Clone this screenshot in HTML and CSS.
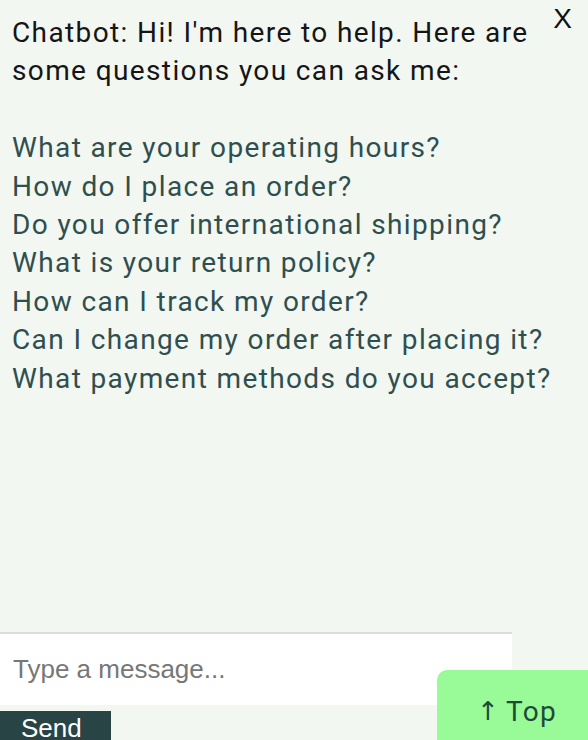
FILE: index.html
```html
<!DOCTYPE html>
<html>
<head>
<meta charset="utf-8">
<link rel="stylesheet" href="styles.css">
</head>
<body>
<div class="chat">
  <div class="messages">
    <div class="bot">Chatbot: Hi! I'm here to help. Here are some questions you can ask me:</div>
    <div class="spacer"></div>
    <ul class="questions">
      <li>What are your operating hours?</li>
      <li>How do I place an order?</li>
      <li>Do you offer international shipping?</li>
      <li>What is your return policy?</li>
      <li>How can I track my order?</li>
      <li>Can I change my order after placing it?</li>
      <li>What payment methods do you accept?</li>
    </ul>
    <button class="close">X</button>
  </div>
  <input class="msg-input" type="text" placeholder="Type a message...">
  <button class="send">Send</button>
</div>
<button class="top-btn"><span class="arrow">↑</span>Top</button>
</body>
</html>
```
FILE: styles.css
```css
html, body {
  margin: 0;
  padding: 0;
  background: #f3f7f1;
}
.chat {
  display: flex;
  flex-direction: column;
  align-items: flex-start;
}
.messages {
  position: relative;
  box-sizing: border-box;
  width: 100%;
  height: 632px;
  padding: 14px 0 0 12px;
  font-family: Roboto, "Noto Sans", sans-serif;
  font-size: 28px;
  line-height: 38.4px;
  letter-spacing: 1.38px;
}
.bot {
  color: #151515;
  max-width: 530px;
}
.spacer {
  height: 38.4px;
}
.questions {
  list-style: none;
  margin: 0;
  padding: 0;
  color: #2f4f4f;
}
.close {
  position: absolute;
  top: 3px;
  right: 16px;
  border: none;
  background: none;
  padding: 0;
  font-family: "Liberation Sans", Arial, sans-serif;
  font-size: 28px;
  letter-spacing: 0;
  color: #111;
}
.msg-input {
  box-sizing: border-box;
  width: 512px;
  height: 73px;
  margin: 0;
  border: none;
  border-top: 2px solid #dcdcd8;
  background: #fff;
  padding: 0 13px;
  font-family: "Liberation Sans", Arial, sans-serif;
  font-size: 26px;
  outline: none;
}
.msg-input::placeholder {
  color: #777;
}
.send {
  margin-top: 6px;
  width: 111px;
  height: 34px;
  border: none;
  background: #284444;
  color: #fff;
  font-family: "Liberation Sans", Arial, sans-serif;
  font-size: 26px;
  text-align: left;
  padding: 0 0 0 21px;
  line-height: 34px;
}
.top-btn {
  position: fixed;
  left: 437px;
  top: 670px;
  width: 170px;
  height: 90px;
  border: none;
  border-radius: 10px 0 0 0;
  background: #98fb98;
  color: #1e4a3a;
  font-family: Roboto, "Noto Sans", sans-serif;
  font-size: 28px;
  letter-spacing: 1.3px;
  display: flex;
  align-items: flex-start;
  padding: 25px 0 0 40px;
  box-sizing: border-box;
}
.arrow {
  font-family: "DejaVu Sans", sans-serif;
  font-size: 26px;
  margin-right: 6px;
  margin-top: 1px;
}
```
